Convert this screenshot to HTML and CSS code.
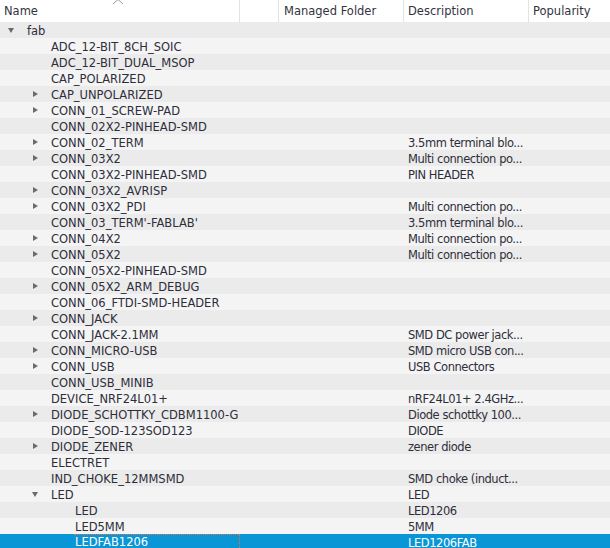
FILE: index.html
```html
<!DOCTYPE html>
<html>
<head>
<meta charset="utf-8">
<link rel="stylesheet" href="styles.css">
</head>
<body>
<div class="tree">
  <div class="header">
    <div class="hcell c-name">Name
      <svg class="sort" width="12" height="6" viewBox="0 0 12 6"><polyline points="1,5 6,0.5 11,5" fill="none" stroke="#9a9a9a" stroke-width="1"/></svg>
    </div>
    <div class="hcell c-blank"></div>
    <div class="hcell c-folder">Managed Folder</div>
    <div class="hcell c-desc">Description</div>
    <div class="hcell c-pop">Popularity</div>
  </div>
  <div class="rows">
    <div class="row"><div class="cell c-name l0"><span class="tw down"></span>fab</div><div class="cell c-blank"></div><div class="cell c-folder"></div><div class="cell c-desc"></div><div class="cell c-pop"></div></div>
    <div class="row"><div class="cell c-name l1"><span class="tw"></span>ADC_12-BIT_8CH_SOIC</div><div class="cell c-blank"></div><div class="cell c-folder"></div><div class="cell c-desc"></div><div class="cell c-pop"></div></div>
    <div class="row"><div class="cell c-name l1"><span class="tw"></span>ADC_12-BIT_DUAL_MSOP</div><div class="cell c-blank"></div><div class="cell c-folder"></div><div class="cell c-desc"></div><div class="cell c-pop"></div></div>
    <div class="row"><div class="cell c-name l1"><span class="tw"></span>CAP_POLARIZED</div><div class="cell c-blank"></div><div class="cell c-folder"></div><div class="cell c-desc"></div><div class="cell c-pop"></div></div>
    <div class="row"><div class="cell c-name l1"><span class="tw right"></span>CAP_UNPOLARIZED</div><div class="cell c-blank"></div><div class="cell c-folder"></div><div class="cell c-desc"></div><div class="cell c-pop"></div></div>
    <div class="row"><div class="cell c-name l1"><span class="tw right"></span>CONN_01_SCREW-PAD</div><div class="cell c-blank"></div><div class="cell c-folder"></div><div class="cell c-desc"></div><div class="cell c-pop"></div></div>
    <div class="row"><div class="cell c-name l1"><span class="tw"></span>CONN_02X2-PINHEAD-SMD</div><div class="cell c-blank"></div><div class="cell c-folder"></div><div class="cell c-desc"></div><div class="cell c-pop"></div></div>
    <div class="row"><div class="cell c-name l1"><span class="tw right"></span>CONN_02_TERM</div><div class="cell c-blank"></div><div class="cell c-folder"></div><div class="cell c-desc">3.5mm terminal blo...</div><div class="cell c-pop"></div></div>
    <div class="row"><div class="cell c-name l1"><span class="tw right"></span>CONN_03X2</div><div class="cell c-blank"></div><div class="cell c-folder"></div><div class="cell c-desc">Multi connection po...</div><div class="cell c-pop"></div></div>
    <div class="row"><div class="cell c-name l1"><span class="tw"></span>CONN_03X2-PINHEAD-SMD</div><div class="cell c-blank"></div><div class="cell c-folder"></div><div class="cell c-desc">PIN HEADER</div><div class="cell c-pop"></div></div>
    <div class="row"><div class="cell c-name l1"><span class="tw right"></span>CONN_03X2_AVRISP</div><div class="cell c-blank"></div><div class="cell c-folder"></div><div class="cell c-desc"></div><div class="cell c-pop"></div></div>
    <div class="row"><div class="cell c-name l1"><span class="tw right"></span>CONN_03X2_PDI</div><div class="cell c-blank"></div><div class="cell c-folder"></div><div class="cell c-desc">Multi connection po...</div><div class="cell c-pop"></div></div>
    <div class="row"><div class="cell c-name l1"><span class="tw"></span>CONN_03_TERM'-FABLAB'</div><div class="cell c-blank"></div><div class="cell c-folder"></div><div class="cell c-desc">3.5mm terminal blo...</div><div class="cell c-pop"></div></div>
    <div class="row"><div class="cell c-name l1"><span class="tw right"></span>CONN_04X2</div><div class="cell c-blank"></div><div class="cell c-folder"></div><div class="cell c-desc">Multi connection po...</div><div class="cell c-pop"></div></div>
    <div class="row"><div class="cell c-name l1"><span class="tw right"></span>CONN_05X2</div><div class="cell c-blank"></div><div class="cell c-folder"></div><div class="cell c-desc">Multi connection po...</div><div class="cell c-pop"></div></div>
    <div class="row"><div class="cell c-name l1"><span class="tw"></span>CONN_05X2-PINHEAD-SMD</div><div class="cell c-blank"></div><div class="cell c-folder"></div><div class="cell c-desc"></div><div class="cell c-pop"></div></div>
    <div class="row"><div class="cell c-name l1"><span class="tw right"></span>CONN_05X2_ARM_DEBUG</div><div class="cell c-blank"></div><div class="cell c-folder"></div><div class="cell c-desc"></div><div class="cell c-pop"></div></div>
    <div class="row"><div class="cell c-name l1"><span class="tw"></span>CONN_06_FTDI-SMD-HEADER</div><div class="cell c-blank"></div><div class="cell c-folder"></div><div class="cell c-desc"></div><div class="cell c-pop"></div></div>
    <div class="row"><div class="cell c-name l1"><span class="tw right"></span>CONN_JACK</div><div class="cell c-blank"></div><div class="cell c-folder"></div><div class="cell c-desc"></div><div class="cell c-pop"></div></div>
    <div class="row"><div class="cell c-name l1"><span class="tw"></span>CONN_JACK-2.1MM</div><div class="cell c-blank"></div><div class="cell c-folder"></div><div class="cell c-desc">SMD DC power jack...</div><div class="cell c-pop"></div></div>
    <div class="row"><div class="cell c-name l1"><span class="tw right"></span>CONN_MICRO-USB</div><div class="cell c-blank"></div><div class="cell c-folder"></div><div class="cell c-desc">SMD micro USB con...</div><div class="cell c-pop"></div></div>
    <div class="row"><div class="cell c-name l1"><span class="tw right"></span>CONN_USB</div><div class="cell c-blank"></div><div class="cell c-folder"></div><div class="cell c-desc">USB Connectors</div><div class="cell c-pop"></div></div>
    <div class="row"><div class="cell c-name l1"><span class="tw"></span>CONN_USB_MINIB</div><div class="cell c-blank"></div><div class="cell c-folder"></div><div class="cell c-desc"></div><div class="cell c-pop"></div></div>
    <div class="row"><div class="cell c-name l1"><span class="tw"></span>DEVICE_NRF24L01+</div><div class="cell c-blank"></div><div class="cell c-folder"></div><div class="cell c-desc">nRF24L01+ 2.4GHz...</div><div class="cell c-pop"></div></div>
    <div class="row"><div class="cell c-name l1"><span class="tw right"></span>DIODE_SCHOTTKY_CDBM1100-G</div><div class="cell c-blank"></div><div class="cell c-folder"></div><div class="cell c-desc">Diode schottky 100...</div><div class="cell c-pop"></div></div>
    <div class="row"><div class="cell c-name l1"><span class="tw"></span>DIODE_SOD-123SOD123</div><div class="cell c-blank"></div><div class="cell c-folder"></div><div class="cell c-desc">DIODE</div><div class="cell c-pop"></div></div>
    <div class="row"><div class="cell c-name l1"><span class="tw right"></span>DIODE_ZENER</div><div class="cell c-blank"></div><div class="cell c-folder"></div><div class="cell c-desc">zener diode</div><div class="cell c-pop"></div></div>
    <div class="row"><div class="cell c-name l1"><span class="tw"></span>ELECTRET</div><div class="cell c-blank"></div><div class="cell c-folder"></div><div class="cell c-desc"></div><div class="cell c-pop"></div></div>
    <div class="row"><div class="cell c-name l1"><span class="tw"></span>IND_CHOKE_12MMSMD</div><div class="cell c-blank"></div><div class="cell c-folder"></div><div class="cell c-desc">SMD choke (induct...</div><div class="cell c-pop"></div></div>
    <div class="row"><div class="cell c-name l1"><span class="tw down"></span>LED</div><div class="cell c-blank"></div><div class="cell c-folder"></div><div class="cell c-desc">LED</div><div class="cell c-pop"></div></div>
    <div class="row"><div class="cell c-name l2"><span class="tw"></span>LED</div><div class="cell c-blank"></div><div class="cell c-folder"></div><div class="cell c-desc">LED1206</div><div class="cell c-pop"></div></div>
    <div class="row"><div class="cell c-name l2"><span class="tw"></span>LED5MM</div><div class="cell c-blank"></div><div class="cell c-folder"></div><div class="cell c-desc">5MM</div><div class="cell c-pop"></div></div>
    <div class="row selected"><div class="cell c-name l2"><span class="tw"></span><span class="focus">LEDFAB1206</span></div><div class="cell c-blank"></div><div class="cell c-folder"></div><div class="cell c-desc">LED1206FAB</div><div class="cell c-pop"></div></div>
  </div>
</div>
</body>
</html>
```

FILE: styles.css
```css
html, body {
  margin: 0;
  padding: 0;
  background: #ffffff;
}
body {
  font-family: "DejaVu Sans", sans-serif;
  font-size: 11.5px;
  color: #2e2e3a;
  width: 610px;
  height: 548px;
  overflow: hidden;
}
.tree {
  display: flex;
  flex-direction: column;
}
.header {
  display: flex;
  height: 22px;
  background: #ffffff;
}
.hcell {
  position: relative;
  box-sizing: border-box;
  height: 22px;
  line-height: 22px;
  padding-left: 4px;
  border-right: 1px solid #e3e3e3;
  white-space: nowrap;
  overflow: hidden;
  color: #333340;
}
.hcell.c-pop { border-right: none; }
.sort {
  position: absolute;
  left: 112px;
  top: -1px;
}
.c-name { width: 240px; flex: none; }
.c-blank { width: 39px; flex: none; }
.c-folder { width: 125px; flex: none; }
.c-desc { width: 125px; flex: none; }
.c-pop { flex: 1; }
.hcell.c-folder { padding-left: 5px; }
.hcell.c-desc { padding-left: 4px; }
.hcell.c-pop { padding-left: 4px; }
.rows {
  display: flex;
  flex-direction: column;
}
.row {
  display: flex;
  height: 16px;
  background: #f4f4f4;
}
.row:nth-child(odd) {
  background: #ebebeb;
}
.row.selected {
  background: #0896d7;
  color: #ffffff;
}
.cell {
  box-sizing: border-box;
  height: 16px;
  line-height: 16px;
  padding-top: 1px;
  white-space: nowrap;
  overflow: hidden;
  display: flex;
  align-items: center;
}
.cell.c-desc {
  padding-left: 4px;
  letter-spacing: -0.45px;
}
.l0 { padding-left: 3px; }
.l1 { padding-left: 27px; }
.l2 { padding-left: 51px; }
.tw {
  width: 24px;
  height: 15px;
  flex: none;
  position: relative;
}
.tw.down::before {
  content: "";
  position: absolute;
  left: 5px;
  top: 5px;
  border-left: 3.5px solid transparent;
  border-right: 3.5px solid transparent;
  border-top: 5px solid #6b6b6b;
}
.tw.right::before {
  content: "";
  position: absolute;
  left: 6px;
  top: 4px;
  border-top: 3.5px solid transparent;
  border-bottom: 3.5px solid transparent;
  border-left: 5px solid #6b6b6b;
}
.focus {
  display: block;
  flex: 1;
  height: 16px;
  box-sizing: border-box;
  margin-top: -1px;
  border-top: 1px dotted #e8743b;
  border-right: 1px dotted #e8743b;
  margin-left: -1px;
  padding-left: 1px;
  line-height: 15px;
}
```
